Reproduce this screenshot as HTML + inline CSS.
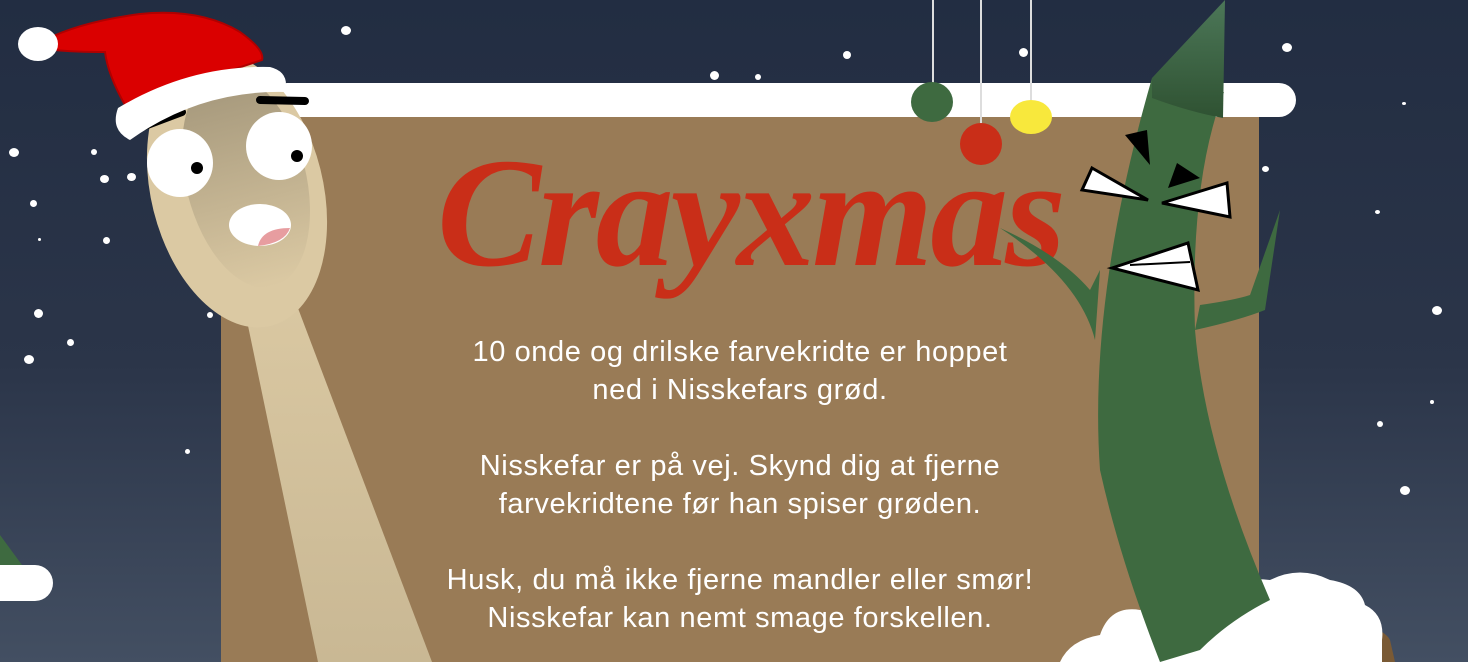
<!DOCTYPE html>
<html><head><meta charset="utf-8"><style>
html,body{margin:0;padding:0;width:1468px;height:662px;overflow:hidden}
body{position:relative;background:linear-gradient(#222d42 0%,#2b3549 55%,#434f62 100%);font-family:"Liberation Sans",sans-serif}
.a{position:absolute}
.board{left:221px;top:100px;width:1038px;height:562px;background:#997b56;border-radius:0 14px 0 0}
.bar{left:270px;top:83px;width:1026px;height:34px;background:#fff;border-radius:17px}
.title{left:380px;top:128px;width:740px;text-align:center;color:#c92e18;font-family:"Liberation Serif",serif;font-weight:bold;font-style:italic;font-size:156px;line-height:170px;letter-spacing:-3px}
.txt{left:340px;top:333px;width:800px;text-align:center;color:#fff;font-size:29px;line-height:38px;letter-spacing:0.6px}
.dot{position:absolute;background:#fff;border-radius:50%}
</style></head><body>
<div class="a board"></div>
<div class="a bar"></div>
<div class="a title">Crayxmas</div>
<div class="a txt">10 onde og drilske farvekridte er hoppet<br>ned i Nisskefars grød.<br><br>Nisskefar er på vej. Skynd dig at fjerne<br>farvekridtene før han spiser grøden.<br><br>Husk, du må ikke fjerne mandler eller smør!<br>Nisskefar kan nemt smage forskellen.</div>

<div class="dot" style="left:341px;top:26px;width:10px;height:9px"></div>
<div class="dot" style="left:710px;top:71px;width:9px;height:9px"></div>
<div class="dot" style="left:755px;top:74px;width:6px;height:6px"></div>
<div class="dot" style="left:843px;top:51px;width:8px;height:8px"></div>
<div class="dot" style="left:1019px;top:48px;width:9px;height:9px"></div>
<div class="dot" style="left:1282px;top:43px;width:10px;height:9px"></div>
<div class="dot" style="left:9px;top:148px;width:10px;height:9px"></div>
<div class="dot" style="left:91px;top:149px;width:6px;height:6px"></div>
<div class="dot" style="left:100px;top:175px;width:9px;height:8px"></div>
<div class="dot" style="left:127px;top:173px;width:9px;height:8px"></div>
<div class="dot" style="left:30px;top:200px;width:7px;height:7px"></div>
<div class="dot" style="left:38px;top:238px;width:3px;height:3px"></div>
<div class="dot" style="left:103px;top:237px;width:7px;height:7px"></div>
<div class="dot" style="left:34px;top:309px;width:9px;height:9px"></div>
<div class="dot" style="left:67px;top:339px;width:7px;height:7px"></div>
<div class="dot" style="left:24px;top:355px;width:10px;height:9px"></div>
<div class="dot" style="left:207px;top:312px;width:6px;height:6px"></div>
<div class="dot" style="left:185px;top:449px;width:5px;height:5px"></div>
<div class="dot" style="left:1402px;top:102px;width:4px;height:3px"></div>
<div class="dot" style="left:1262px;top:166px;width:7px;height:6px"></div>
<div class="dot" style="left:1375px;top:210px;width:5px;height:4px"></div>
<div class="dot" style="left:1432px;top:306px;width:10px;height:9px"></div>
<div class="dot" style="left:1430px;top:400px;width:4px;height:4px"></div>
<div class="dot" style="left:1377px;top:421px;width:6px;height:6px"></div>
<div class="dot" style="left:1400px;top:486px;width:10px;height:9px"></div>

<svg class="a" style="left:0;top:0" width="1468" height="662" viewBox="0 0 1468 662">
<defs>
<linearGradient id="sp" x1="0" y1="0" x2="0" y2="1"><stop offset="0" stop-color="#dbc9a3"/><stop offset="1" stop-color="#c9b894"/></linearGradient>
<linearGradient id="bowl" x1="0" y1="0" x2="0" y2="1"><stop offset="0" stop-color="#a3967a"/><stop offset="1" stop-color="#dbc9a3"/></linearGradient>
<linearGradient id="tip" x1="0" y1="0" x2="0" y2="1"><stop offset="0" stop-color="#4c7758"/><stop offset="1" stop-color="#2f5232"/></linearGradient>
</defs>
<polygon points="0,535 22,565 0,565" fill="#3e6a40"/>
<rect x="-20" y="565" width="73" height="36" rx="18" fill="#fff"/>
<line x1="933" y1="0" x2="933" y2="90" stroke="#ddd" stroke-width="2"/>
<line x1="981" y1="0" x2="981" y2="130" stroke="#ddd" stroke-width="2"/>
<line x1="1031" y1="0" x2="1031" y2="100" stroke="#ddd" stroke-width="2"/>
<ellipse cx="932" cy="102" rx="21" ry="20" fill="#3e6a40"/>
<ellipse cx="981" cy="144" rx="21" ry="21" fill="#c92e18"/>
<ellipse cx="1031" cy="117" rx="21" ry="17" fill="#f8e83c"/>
<!-- spoon -->
<polygon points="236,268 282,266 432,662 318,662" fill="url(#sp)"/>
<ellipse cx="237" cy="190" rx="86" ry="140" transform="rotate(-14 237 190)" fill="#dbc9a3"/>
<ellipse cx="246" cy="180" rx="60" ry="110" transform="rotate(-14 246 180)" fill="url(#bowl)"/>
<ellipse cx="180" cy="163" rx="33" ry="34" fill="#fff"/>
<circle cx="197" cy="168" r="6" fill="#000"/>
<ellipse cx="279" cy="146" rx="33" ry="34" fill="#fff"/>
<circle cx="297" cy="156" r="6" fill="#000"/>
<ellipse cx="260" cy="225" rx="31" ry="21" fill="#fff"/>
<path d="M258,246 Q262,228 290,228 Q285,243 258,246Z" fill="#e79da0"/>
<line x1="142" y1="127" x2="182" y2="112" stroke="#000" stroke-width="8" stroke-linecap="round"/>
<line x1="260" y1="100" x2="305" y2="101" stroke="#000" stroke-width="8" stroke-linecap="round"/>
<!-- hat -->
<path d="M45,40 Q80,22 140,14 Q200,8 240,32 Q265,50 262,60 L125,105 Q108,75 105,52 Q75,52 55,50Z" fill="#da0000" stroke="#b00000" stroke-width="2"/>
<path d="M118,108 Q190,65 270,67 Q290,72 285,92 Q200,90 130,140 Q110,130 118,108Z" fill="#fff"/>
<ellipse cx="38" cy="44" rx="20" ry="17" fill="#fff"/>
<path d="M1300,620 Q1380,620 1390,640 L1395,662 L1300,662Z" fill="#7a5a35"/>
<path d="M1060,662 Q1070,640 1100,635 Q1110,605 1140,610 Q1165,595 1190,600 Q1230,575 1270,580 Q1300,565 1330,580 Q1360,585 1365,605 Q1385,615 1382,640 L1382,662Z" fill="#fff"/>
<!-- crayon -->
<path d="M1000,228 Q1060,255 1090,290 L1100,270 L1095,340 Q1080,280 1000,228Z" fill="#3e6a40"/>
<path d="M1280,210 L1265,310 Q1240,320 1195,330 L1200,305 Q1235,300 1250,295 Z" fill="#3e6a40"/>
<path d="M1152,78 Q1215,95 1224,92 Q1190,180 1195,330 Q1205,450 1270,600 Q1230,620 1200,650 L1160,662 Q1120,560 1100,470 Q1088,300 1152,78Z" fill="#3e6a40"/>
<path d="M1152,78 L1225,0 L1223,118 Q1190,112 1152,98Z" fill="url(#tip)"/>
<path d="M1092,168 L1148,200 L1082,190Z" fill="#fff" stroke="#000" stroke-width="3"/>
<path d="M1162,203 L1227,183 L1230,217Z" fill="#fff" stroke="#000" stroke-width="3"/>
<polygon points="1125,135 1147,130 1150,165" fill="#000"/>
<polygon points="1177,163 1200,178 1168,188" fill="#000"/>
<path d="M1112,268 L1188,243 L1198,290Z" fill="#fff" stroke="#000" stroke-width="3"/>
<line x1="1130" y1="265" x2="1190" y2="262" stroke="#000" stroke-width="2"/>
</svg>
</body></html>
